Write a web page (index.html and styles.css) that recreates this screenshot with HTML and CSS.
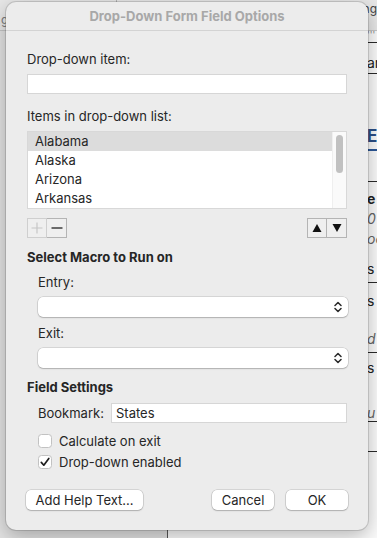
FILE: index.html
```html
<!DOCTYPE html>
<html>
<head>
<meta charset="utf-8">
<title>Drop-Down Form Field Options</title>
<link rel="stylesheet" href="styles.css">
</head>
<body>
<div class="doc">
  <div class="toolbar">
    <span class="tb-frag-left">g</span>
    <span class="tb-divider"></span>
    <span class="tb-frag-right">ding</span>
  </div>
  <div class="panes">
    <div class="pane-left"></div>
    <div class="pane-right">
      <div class="row r1"><span class="ticks">'''</span></div>
      <div class="row r2"><span class="t-ar">ar</span></div>
      <div class="row r3"><span class="t-e">E</span></div>
      <div class="row r4"></div>
      <div class="row r5">
        <div class="ln b">e</div>
        <div class="ln i">0</div>
        <div class="ln i">oc</div>
        <div class="ln gap"><span>s</span><span class="gbox"></span></div>
      </div>
      <div class="row r6">
        <div class="ln s1">s -</div>
        <div class="ln i s2">d</div>
      </div>
      <div class="row r7">
        <div class="ln s1">s -</div>
        <div class="ln i s3">u</div>
      </div>
      <div class="row r8"></div>
    </div>
  </div>
</div>

<div class="dialog">
  <div class="titlebar">Drop-Down Form Field Options</div>
  <div class="content">
    <div class="label">Drop-down item:</div>
    <div class="text-input m7"></div>
    <div class="label m14">Items in drop-down list:</div>
    <div class="listbox">
      <div class="list-rows">
        <div class="list-row selected">Alabama</div>
        <div class="list-row">Alaska</div>
        <div class="list-row">Arizona</div>
        <div class="list-row">Arkansas</div>
      </div>
      <div class="scroll-track"><div class="scroll-thumb"></div></div>
    </div>
    <div class="list-controls">
      <div class="seg">
        <div class="seg-btn disabled">
          <svg width="12" height="12" viewBox="0 0 12 12"><path d="M6 0.5V11.5M0.5 6H11.5" stroke="#c6c6c6" stroke-width="1.2"/></svg>
        </div>
        <div class="seg-btn">
          <svg width="12" height="12" viewBox="0 0 12 12"><path d="M0.5 6H11.5" stroke="#222" stroke-width="1.3"/></svg>
        </div>
      </div>
      <div class="seg">
        <div class="seg-btn">
          <svg width="10" height="10" viewBox="0 0 10 10"><path d="M5 1L9.5 9H0.5Z" fill="#111"/></svg>
        </div>
        <div class="seg-btn">
          <svg width="10" height="10" viewBox="0 0 10 10"><path d="M0.5 1H9.5L5 9Z" fill="#111"/></svg>
        </div>
      </div>
    </div>

    <div class="heading m11">Select Macro to Run on</div>
    <div class="indent">
      <div class="label m9">Entry:</div>
      <div class="select m7">
        <svg class="chev" width="8" height="12" viewBox="0 0 8 12"><path d="M1 4.5L4 1.5L7 4.5M1 7.5L4 10.5L7 7.5" fill="none" stroke="#2a2a2a" stroke-width="1.5" stroke-linecap="round" stroke-linejoin="round"/></svg>
      </div>
      <div class="label m8">Exit:</div>
      <div class="select m7">
        <svg class="chev" width="8" height="12" viewBox="0 0 8 12"><path d="M1 4.5L4 1.5L7 4.5M1 7.5L4 10.5L7 7.5" fill="none" stroke="#2a2a2a" stroke-width="1.5" stroke-linecap="round" stroke-linejoin="round"/></svg>
      </div>
    </div>

    <div class="heading m11">Field Settings</div>
    <div class="indent">
      <div class="bookmark-row m8">
        <span class="bm-label">Bookmark:</span>
        <div class="text-input bm-input">States</div>
      </div>
      <div class="check-row m10">
        <span class="checkbox"></span>
        <span>Calculate on exit</span>
      </div>
      <div class="check-row m5">
        <span class="checkbox">
          <svg width="12" height="12" viewBox="0 0 12 12"><path d="M2.3 6.4L4.8 9.2L9.8 2.4" fill="none" stroke="#1e1e1e" stroke-width="1.7" stroke-linecap="round" stroke-linejoin="round"/></svg>
        </span>
        <span>Drop-down enabled</span>
      </div>
    </div>

    <div class="button-row">
      <div class="btn btn-help">Add Help Text...</div>
      <div class="btn-group">
        <div class="btn btn-std">Cancel</div>
        <div class="btn btn-std">OK</div>
      </div>
    </div>
  </div>
</div>
</body>
</html>
```

FILE: styles.css
```css
html, body {
  margin: 0;
  padding: 0;
}
body {
  width: 377px;
  height: 538px;
  overflow: hidden;
  position: relative;
  background: #e3e3e3;
  font-family: Inter, "Liberation Sans", sans-serif;
}

/* background document */
.doc {
  display: flex;
  flex-direction: column;
  height: 538px;
}
.toolbar {
  height: 30px;
  border-bottom: 1px solid #c4c4c4;
  background: #e7e7e7;
  display: flex;
  align-items: flex-start;
  font-size: 12px;
  color: #7a7a7a;
  overflow: hidden;
  white-space: nowrap;
}
.tb-frag-left {
  margin-top: 12px;
  margin-left: 1px;
  width: 129px;
}
.tb-divider {
  width: 1px;
  height: 4px;
  background: #b5b5b5;
}
.tb-frag-right {
  margin-left: 235px;
  margin-top: 1px;
  color: #444;
}
.panes {
  flex: 1;
  display: flex;
}
.pane-left {
  width: 167px;
  background: #e2e2e2;
}
.pane-right {
  flex: 1;
  background: #fbfbfb;
  border-left: 1px solid #555;
  display: flex;
  flex-direction: column;
  overflow: hidden;
  white-space: nowrap;
  font-size: 14px;
  color: #222;
}
.row {
  padding-left: 199px;
  border-bottom: 1px solid #2a2a2a;
  box-sizing: border-box;
}
.r1 { height: 12px; }
.ticks { font-size: 9px; color: #888; line-height: 8px; display: block; }
.r2 { height: 31px; padding-top: 11px; line-height: 18px; }
.r3 { height: 77px; padding-top: 52px; border-bottom: 2px solid #2b5797; }
.t-e { font-weight: 700; font-size: 17px; color: #2b4f86; line-height: 20px; }
.r4 { height: 31px; }
.r5 { height: 101px; padding-top: 7px; }
.r6 { height: 70px; padding-top: 8px; }
.r7 { height: 69px; padding-top: 5px; }
.r8 { height: 30px; }
.ln { line-height: 20px; height: 20px; }
.ln.b { font-weight: 700; }
.ln.i { font-style: italic; color: #666; }
.ln.gap { margin-top: 10px; display: flex; align-items: center; gap: 3px; }
.gbox { width: 8px; height: 12px; background: #c8c8c8; }
.s2 { margin-top: 18px; }
.s3 { margin-top: 25px; }

/* dialog */
.dialog {
  position: absolute;
  left: 6px;
  top: 2px;
  width: 362px;
  height: 528px;
  box-sizing: border-box;
  background: #ececec;
  border-radius: 10px;
  box-shadow: 0 0 0 1px rgba(0, 0, 0, 0.13), 0 6px 20px rgba(0, 0, 0, 0.28);
  display: flex;
  flex-direction: column;
  font-size: 13px;
  color: #262626;
}
.titlebar {
  height: 28px;
  border-bottom: 1px solid #d3d3d3;
  display: flex;
  align-items: center;
  justify-content: center;
  font-weight: 700;
  color: #a8a8a8;
}
.content {
  padding: 20px 21px 0 21px;
  display: flex;
  flex-direction: column;
}
.label, .heading {
  line-height: 16px;
  height: 16px;
}
.heading { font-weight: 700; }
.m5 { margin-top: 5px; }
.m7 { margin-top: 7px; }
.m8 { margin-top: 8px; }
.m9 { margin-top: 9px; }
.m10 { margin-top: 10px; }
.m11 { margin-top: 11px; }
.m14 { margin-top: 14px; }

.text-input {
  height: 20px;
  box-sizing: border-box;
  background: #fff;
  border: 1px solid #d6d6d6;
  line-height: 18px;
  padding-left: 4px;
}

.listbox {
  margin-top: 7px;
  height: 78px;
  box-sizing: border-box;
  border: 1px solid #d8d8d8;
  background: #fff;
  display: flex;
}
.list-rows {
  flex: 1;
}
.list-row {
  height: 19px;
  line-height: 19px;
  padding-left: 7px;
}
.list-row.selected {
  background: #dcdcdc;
}
.scroll-track {
  width: 14px;
  background: #fafafa;
  border-left: 1px solid #efefef;
  display: flex;
  justify-content: center;
  padding-top: 3px;
  box-sizing: border-box;
}
.scroll-thumb {
  width: 7px;
  height: 38px;
  border-radius: 4px;
  background: #c1c1c1;
}

.list-controls {
  margin-top: 9px;
  height: 20px;
  display: flex;
  justify-content: space-between;
}
.seg {
  display: flex;
}
.seg-btn {
  width: 20px;
  height: 20px;
  box-sizing: border-box;
  border: 1px solid #b4b4b4;
  display: flex;
  align-items: center;
  justify-content: center;
  background: #efefef;
}
.seg-btn + .seg-btn {
  border-left: none;
}
.seg-btn.disabled {
  border-color: #cfcfcf;
}

.indent {
  padding-left: 11px;
  display: flex;
  flex-direction: column;
}
.select {
  height: 20px;
  background: #fff;
  border-radius: 5px;
  box-shadow: 0 0 0 0.5px rgba(0, 0, 0, 0.18), 0 1px 1.5px rgba(0, 0, 0, 0.18);
  display: flex;
  align-items: center;
  justify-content: flex-end;
  padding-right: 6px;
  margin-right: -1px;
}

.bookmark-row {
  display: flex;
  align-items: center;
  height: 20px;
}
.bm-label {
  width: 73px;
}
.bm-input {
  flex: 1;
}

.check-row {
  display: flex;
  align-items: center;
  height: 16px;
  gap: 7px;
}
.checkbox {
  width: 14px;
  height: 14px;
  box-sizing: border-box;
  border: 1px solid #c2c2c2;
  border-radius: 3.5px;
  background: #fff;
  display: flex;
  align-items: center;
  justify-content: center;
}

.button-row {
  margin-top: 20px;
  display: flex;
  justify-content: space-between;
  margin-left: -1px;
  margin-right: -1px;
}
.btn-group {
  display: flex;
  gap: 12px;
}
.btn {
  height: 20px;
  line-height: 20px;
  text-align: center;
  background: #fff;
  border-radius: 5px;
  box-shadow: 0 0 0 0.5px rgba(0, 0, 0, 0.2), 0 1px 1.5px rgba(0, 0, 0, 0.18);
}
.btn-help { width: 117px; }
.btn-std { width: 62px; }
```
